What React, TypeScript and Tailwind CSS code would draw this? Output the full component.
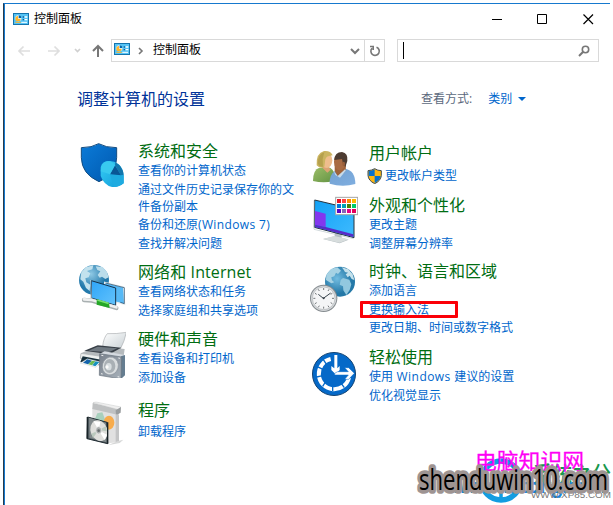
import type { ReactNode } from "react";

function PanelIcon() {
  return (
    <svg width="16" height="12" viewBox="0 0 48 36" className="shrink-0">
      <rect x="1.5" y="1.5" width="45" height="33" fill="#56c4f5" stroke="#1474ae" strokeWidth="3" />
      <circle cx="16" cy="16" r="9" fill="#e9f8ff" />
      <path d="M15 17V9a8 8 0 1 0 8 8z" fill="#ffb52b" />
      <path d="M17 15V7a8 8 0 0 1 8 8z" fill="#0065ad" />
      <path d="M29 10h4v4h-4zM29 18h4v4h-4z" fill="#125c9c" />
      <path d="M35 10h8v4h-8zM35 18h8v4h-8z" fill="#fff" />
      <path d="M7 28h16" stroke="#ffb52b" strokeWidth="3" />
      <path d="M25 28h17" stroke="#fff" strokeWidth="3" />
    </svg>
  );
}

function ShieldIcon() {
  return (
    <svg width="48" height="48" viewBox="24 33 144 144">
      <defs>
        <linearGradient id="shield" x1="0" y1="0" x2="1" y2="1">
          <stop offset="0" stopColor="#0b7bd8" />
          <stop offset="1" stopColor="#0058ae" />
        </linearGradient>
        <linearGradient id="orb" x1="0" y1="0" x2="1" y2="1">
          <stop offset="0" stopColor="#36cdf5" />
          <stop offset="1" stopColor="#119bd8" />
        </linearGradient>
      </defs>
      <path d="M34 53Q66 53 86 41Q107 53 140 53V83Q139 134 87 155Q35 132 34 83Z" fill="url(#shield)" stroke="#144c80" strokeWidth="3" />
      <path d="M92 119Q91 100 108 94Q128 89 146 103Q160 115 161 137V160Q145 173 126 171Q102 166 92 138Z" fill="url(#orb)" />
      <path d="M136 97Q158 109 161 134L153 136L135 105Z" fill="#1376ac" />
      <path d="M135 106L153 136L120 133Z" fill="#095695" />
      <path d="M135 106L120 133L92 124Q94 99 113 94Q126 92 135 106Z" fill="#39c9ef" />
      <path d="M120 134L153 137L161 134V160Q145 172 132 171Z" fill="#1eabe0" />
    </svg>
  );
}

function NetworkIcon() {
  return (
    <svg width="48" height="48" viewBox="24 24 144 144">
      <defs>
        <radialGradient id="netGlobe" cx="40%" cy="30%">
          <stop offset="0" stopColor="#8fc9e5" />
          <stop offset="1" stopColor="#2379ab" />
        </radialGradient>
        <linearGradient id="netScreen" x1="0" y1="0" x2="1" y2="1">
          <stop offset="0" stopColor="#2fa5f8" />
          <stop offset="1" stopColor="#63c3fc" />
        </linearGradient>
      </defs>
      <circle cx="72" cy="75" r="45" fill="url(#netGlobe)" />
      <path d="M34 52L48 37L70 31L67 43L51 48L61 55L56 67L46 70L49 82L61 89L59 108L48 99L40 80L31 73Z" fill="#c3e2ee" />
      <path d="M77 34L98 36L111 51L116 67L106 72L96 65L89 68L83 60L91 49L82 45Z" fill="#bbddeb" />
      <path d="M104 82L161 96L164 148L104 133Z" fill="#56b9f6" stroke="#e8eef0" strokeWidth="4" />
      <path d="M107 84L163 98V146L151 142" fill="none" stroke="#183b59" strokeWidth="2" />
      <path d="M64 77L137 99V151L64 129Z" fill="url(#netScreen)" stroke="#14324d" strokeWidth="3" />
      <path d="M62 75L64 134L132 153" fill="none" stroke="#dde5e5" strokeWidth="2" />
      <path d="M42 135L66 137L139 159" fill="none" stroke="#a9b0b1" strokeWidth="13" strokeLinecap="round" />
      <path d="M42 133L66 135L139 157" fill="none" stroke="#eff0f0" strokeWidth="8" strokeLinecap="round" />
      <path d="M80 133L117 144L119 159L80 149Z" fill="#25a727" />
      <path d="M82 135L116 145" stroke="#77e072" strokeWidth="5" />
    </svg>
  );
}

function PrinterIcon() {
  return (
    <svg width="48" height="48" viewBox="24 15 144 144">
      <defs>
        <linearGradient id="paper" x1="0" y1="0" x2="1" y2="1">
          <stop offset="0" stopColor="#fff" />
          <stop offset="1" stopColor="#c8d0d4" />
        </linearGradient>
        <linearGradient id="speaker" x1="0" y1="0" x2="1" y2="1">
          <stop offset="0" stopColor="#79818c" />
          <stop offset="1" stopColor="#a7b1ba" />
        </linearGradient>
      </defs>
      <path d="M112 26Q140 27 169 22Q164 48 151 72L98 63Q101 38 112 26Z" fill="url(#paper)" stroke="#aaaeb0" strokeWidth="2" />
      <path d="M33 85L80 63L164 72L160 101L95 121L31 101Z" fill="#b5babd" />
      <path d="M43 77L83 61L154 68L118 88Z" fill="#383f47" />
      <path d="M55 77L83 65L142 70L116 82Z" fill="#707981" />
      <path d="M33 85L113 97L100 120L31 99Z" fill="#edf0ef" stroke="#a9aeb0" strokeWidth="2" />
      <path d="M38 94L93 104L86 121L31 111Z" fill="#162f3b" />
      <path d="M31 114L52 101L94 111L77 127Z" fill="#fafafa" stroke="#b2b9bb" strokeWidth="1" />
      <path d="M39 113L52 103L66 107L54 118Z" fill="#1463aa" />
      <path d="M55 118L66 107L77 109L66 121Z" fill="#6bba52" />
      <path d="M67 121L77 109L88 112L76 124Z" fill="#1690bf" />
      <path d="M89 86L104 79L164 90L155 97Z" fill="#d5dae0" />
      <path d="M153 94L165 90V151L153 162Z" fill="#657d90" />
      <path d="M89 86L155 96L153 162L88 151Z" fill="url(#speaker)" stroke="#66717c" strokeWidth="2" />
      <ellipse cx="121" cy="123" rx="24" ry="27" fill="#d9dddf" stroke="#8b949c" strokeWidth="2" transform="rotate(15 121 123)" />
      <ellipse cx="119" cy="123" rx="17" ry="21" fill="#a9b0b5" />
      <ellipse cx="116" cy="125" rx="9" ry="11" fill="#d8dee1" />
      <circle cx="111" cy="126" r="5" fill="#fafafa" />
      <path d="M94 91L100 92M145 99L150 100M93 146L98 147M143 155L148 156" stroke="#eee" strokeWidth="3" />
    </svg>
  );
}

function ProgramsIcon() {
  return (
    <svg width="48" height="48" viewBox="24 225 144 144">
      <path d="M141 349L160 344L149 354L114 361Z" fill="#d7d8d8" />
      <path d="M67 248L146 265L145 351L116 355L67 340Z" fill="#e1e1e1" />
      <path d="M68 234L149 253L145 270L67 252Z" fill="#bfc1c2" />
      <path d="M69 233L78 231L153 246L145 254Z" fill="#f0f0f0" stroke="#b4b6b7" strokeWidth="1" />
      <path d="M137 256L153 246L152 263L138 271Z" fill="#999d9f" />
      <path d="M137 267L147 271V348L137 351Z" fill="#c4c5c6" />
      <path d="M82 265L97 262L111 299H68Z" fill="#a8d0bd" />
      <ellipse cx="117" cy="293" rx="16" ry="21" fill="#f7ac4d" />
      <path d="M53 276L111 292L113 356L51 341Z" fill="#4b565b" stroke="#222e34" strokeWidth="3" />
      <path d="M57 278L108 293L109 352L58 339Z" fill="#81898b" />
      <ellipse cx="87" cy="317" rx="25" ry="32" transform="rotate(-22 87 317)" fill="#dfdfdc" />
      <path d="M86 316L70 288L91 291ZM86 316L111 329L104 345Z" fill="#fff" />
      <path d="M86 316L107 304L111 319ZM86 316L64 326L69 339Z" fill="#bbc9be" />
      <ellipse cx="86" cy="316" rx="9" ry="11" fill="#aaaeae" stroke="#eee" strokeWidth="2" />
      <circle cx="86" cy="317" r="4" fill="#666c6d" />
      <path d="M52 276V341M113 292V356" stroke="#182327" strokeWidth="4" />
    </svg>
  );
}

function UsersIcon() {
  return (
    <svg width="48" height="48" viewBox="30 24 144 144">
      <defs>
        <linearGradient id="greenTop" x1="0" y1="0" x2="1" y2="1">
          <stop offset="0" stopColor="#9dbe68" />
          <stop offset="1" stopColor="#629343" />
        </linearGradient>
        <linearGradient id="blueTop" x1="0" y1="0" x2="1" y2="1">
          <stop offset="0" stopColor="#73a1d1" />
          <stop offset="1" stopColor="#7faee0" />
        </linearGradient>
      </defs>
      <path d="M39 138Q39 104 58 98L83 96Q101 101 104 119L100 139Q68 145 39 138Z" fill="url(#greenTop)" />
      <path d="M65 88L82 91L92 104L82 113L67 98Z" fill="#dca373" />
      <ellipse cx="80" cy="76" rx="17" ry="23" fill="#efbd8d" />
      <path d="M50 91Q48 54 72 48Q92 46 98 61L88 63Q75 65 75 80L73 95Q60 102 50 91Z" fill="#cbb461" />
      <path d="M53 85Q55 56 73 52L68 73L69 95Q59 98 53 85Z" fill="#b5a04d" />
      <path d="M89 146Q88 119 105 107L136 101Q166 107 166 147Q127 158 89 146Z" fill="url(#blueTop)" />
      <path d="M104 89L138 88L137 106Q129 119 113 124L104 108Z" fill="#9f633b" />
      <path d="M101 108L113 123L135 103L138 106L120 128L106 120Z" fill="#c7dbea" />
      <ellipse cx="119" cy="81" rx="17" ry="25" fill="#a96b43" />
      <path d="M103 75Q104 51 126 51Q145 54 142 78L136 96L129 86L126 72Q115 74 103 75Z" fill="#4d3c32" />
      <ellipse cx="131" cy="87" rx="4" ry="7" fill="#9a5f3a" />
    </svg>
  );
}

const swatches = [
  "#e81123", "#ff4343", "#ff8c00", "#ffb900",
  "#0078d7", "#00a2b3", "#498205", "#00cc6a",
  "#5c00c5", "#8764b8", "#e3008c", "#e50059",
];

function DisplayIcon() {
  return (
    <svg width="48" height="48" viewBox="30 183 144 144">
      <defs>
        <linearGradient id="display" x1="0" y1="0" x2="1" y2="1">
          <stop offset="0" stopColor="#12a1f5" />
          <stop offset="1" stopColor="#3fbbff" />
        </linearGradient>
      </defs>
      <path d="M104 285L124 289L125 308L146 314L119 325L69 312L104 304Z" fill="#b5bec2" />
      <path d="M69 312L103 303L146 313L119 323Z" fill="#d7dddd" />
      <path d="M44 195L162 223V308L43 277Z" fill="url(#display)" stroke="#26343f" strokeWidth="3" />
      <path d="M42 196V283L161 311" fill="none" stroke="#bac5ca" strokeWidth="2" />
      <path d="M45 228L77 236V276L45 269Z" fill="#8337ee" />
      <path d="M45 269L77 276L160 298V306L45 276Z" fill="#592ac9" />
      <rect x="107" y="187" width="66" height="52" fill="#fff" stroke="#a5a5a5" strokeWidth="3" />
      {swatches.map((color, i) => (
        <rect key={color} x={111 + (i % 4) * 15} y={192 + Math.floor(i / 4) * 15} width="12" height="12" fill={color} />
      ))}
    </svg>
  );
}

function ClockIcon() {
  return (
    <svg width="48" height="48" viewBox="30 30 144 144">
      <defs>
        <radialGradient id="globe" cx="40%" cy="40%">
          <stop offset="0" stopColor="#72bce0" />
          <stop offset="1" stopColor="#2478a7" />
        </radialGradient>
      </defs>
      <circle cx="120" cy="80" r="45" fill="url(#globe)" />
      <path d="M79 59L93 42L112 37L123 47L114 57L108 53L103 64L94 67L96 76L103 82L94 85L78 75Z" fill="#a6d2e4" />
      <path d="M125 37L145 43L158 58L163 75L155 72L149 62L143 67L137 58L144 53L135 51L131 44Z" fill="#c5e1eb" />
      <path d="M129 69L148 74L154 88L149 105L139 120L130 106L129 94L119 89L122 75Z" fill="#92c8df" />
      <circle cx="71" cy="130" r="41" fill="#858b8f" />
      <circle cx="71" cy="130" r="38" fill="#d5d8da" />
      <circle cx="71" cy="130" r="34" fill="#f4f5f6" stroke="#aeb2b5" strokeWidth="2" />
      <path d="M71 99V105M71 155V161M40 130H46M96 130H102M55 103L58 108M87 103L84 108M45 115L50 118M97 115L92 118M45 146L50 143M97 146L92 143M55 157L58 152M87 157L84 152" stroke="#73777a" strokeWidth="3" />
      <path d="M55 118L70 130L92 114" fill="none" stroke="#38444d" strokeWidth="3" />
      <circle cx="71" cy="130" r="3" fill="#303840" />
    </svg>
  );
}

function EaseIcon() {
  return (
    <svg width="48" height="48" viewBox="30 285 144 144">
      <circle cx="102" cy="357" r="64.5" fill="#0569c8" stroke="#124373" strokeWidth="3" />
      {/* dial, open where the two arrows cross it */}
      <path d="M92 312A46 46 0 1 0 147 368" fill="none" stroke="#fff" strokeWidth="12" />
      <path d="M68 311L80 329M52 335L70 344M50 366L68 362M68 394L78 378M98 408V392M133 398L122 383" stroke="#0569c8" strokeWidth="4" />
      <path d="M103 300H112V340L119 333V345L107 358L94 345V333L103 340Z" fill="#fff" />
      <path d="M113 350H145L134 338H146L163 355L146 373H134L145 360H104V355Z" fill="#fff" stroke="#0569c8" strokeWidth="1.5" />
    </svg>
  );
}

function UacShield() {
  return (
    <svg width="15" height="16" viewBox="202 94 45 48" className="shrink-0">
      <path d="M205 102Q217 101 225 96Q234 102 245 102V117Q243 133 225 141Q206 132 205 116Z" fill="#fdb813" stroke="#424b50" strokeWidth="3" />
      <path d="M207 104Q217 103 225 98V118H207ZM225 118H243Q241 131 225 139Z" fill="#0872cc" />
    </svg>
  );
}

type SectionProps = {
  icon: ReactNode;
  title: string;
  className: string;
  iconClass?: string;
  linksClass?: string;
  children: ReactNode;
};

function Section({ icon, title, className, iconClass = "", linksClass = "pt-px", children }: SectionProps) {
  return (
    <section className={`flex ${className}`}>
      <div className={`w-12 shrink-0 ${iconClass}`}>{icon}</div>
      <div>
        <h2 className="h-5 text-base leading-5 text-[#006d12] whitespace-nowrap">{title}</h2>
        <div className={`flex flex-col items-start gap-[1.5px] text-xs leading-[17px] text-[#0066cc] ${linksClass}`}>{children}</div>
      </div>
    </section>
  );
}

function Watermark() {
  return (
    <svg width="203" height="62" viewBox="410 443 203 62" className="absolute right-0 bottom-0">
      <circle cx="501" cy="480.5" r="19.5" fill="none" stroke="#139de1" strokeWidth="5.5" />
      <path d="M484 490H518M501 484V501" stroke="#139de1" strokeWidth="3.5" />
      <text x="533" y="483" fontSize="23" fontWeight="500" textLength="78" lengthAdjust="spacingAndGlyphs" fill="#17984c">系统之分</text>
      <text x="452" y="493" fontSize="20" fontWeight="700" textLength="154" lengthAdjust="spacingAndGlyphs" fill="#1685df">www.xitong.com</text>
      <text x="531" y="498" fontSize="8.5" textLength="80" lengthAdjust="spacingAndGlyphs" fill="#777" fontFamily="Liberation Sans, sans-serif">WWW.XP85.COM</text>
      <text x="475" y="469" fontSize="22" textLength="109" lengthAdjust="spacingAndGlyphs" fill="#ff00f6" stroke="#ff00f6" strokeWidth="0.3">电脑知识网</text>
      <text x="419" y="490" fontSize="29.5" fontWeight="500" textLength="189" lengthAdjust="spacingAndGlyphs" fill="#000" stroke="#9e9492" strokeWidth="7.5" strokeLinejoin="round" paintOrder="stroke">shenduwin10.com</text>
    </svg>
  );
}

export default function App() {
  return (
    <div className="relative h-[505px] w-[613px] overflow-hidden bg-white pt-[3px] pl-[3px] font-['Open_Sans','Noto_Sans_CJK_SC',sans-serif]">
      <div className="h-[502px] w-[607px] border-t border-l border-t-[#1679ce] border-l-[#263b4d]">
        <div className="h-full border-l border-[#1679ce]">
          <header className="flex h-[29px] items-center pl-2 text-xs text-black">
            <PanelIcon />
            <span className="ml-[5px] leading-4">控制面板</span>
            <svg width="104" height="12" viewBox="0 0 104 12" className="ml-auto mr-[14px]" fill="none" stroke="#000">
              <path d="M0 6.5H10" />
              <path d="M45.5 1.5H54.5V10.5H45.5Z" />
              <path d="M91.5 1.5L101 11M101 1.5L91.5 11" strokeWidth="1.2" />
            </svg>
          </header>

          <nav className="mt-[6px] flex h-[23px] items-center">
            <svg width="87" height="16" viewBox="0 0 87 16" className="shrink-0" fill="none" strokeWidth="1.7">
              <path d="M25 8H14M18.5 3.5L14 8L18.5 12.5M43 8H54M49.5 3.5L54 8L49.5 12.5" stroke="#dedede" />
              <path d="M70 6L72.5 8.5L75 6" stroke="#d0d0d0" />
            </svg>
            <svg width="12" height="14" viewBox="0 0 12 14" className="mr-[7px] shrink-0" fill="none" stroke="#777" strokeWidth="2">
              <path d="M6 13V2M1 7L6 2L11 7" />
            </svg>
            <div className="flex h-[23px] w-[274px] shrink-0 items-center border border-[#d9d9d9] pl-[2px] text-xs">
              <div className="pb-[3px]">
                <PanelIcon />
              </div>
              <svg width="6" height="8" viewBox="0 0 6 8" className="ml-[8px]" fill="none" stroke="#777" strokeWidth="1.6">
                <path d="M1 1L4 4L1 7" />
              </svg>
              <span className="ml-[9px] pb-px">控制面板</span>
              <svg width="10" height="8" viewBox="0 0 10 8" className="ml-auto mr-[4px]" fill="none" stroke="#777" strokeWidth="2">
                <path d="M1 2L5 6L9 2" />
              </svg>
              <div className="flex h-full w-5 items-center justify-center border-l border-[#d9d9d9]">
                <svg width="12" height="12" viewBox="0 0 12 12" fill="none" stroke="#777" strokeWidth="1.6">
                  <path d="M7.5 2.2A4.2 4.2 0 1 1 3 3.3M1 1.5H4.2V5" />
                </svg>
              </div>
            </div>
            <div className="ml-3 flex h-[23px] w-[202px] shrink-0 items-center border border-[#d9d9d9] pl-[5px]">
              <div className="h-[17px] w-px bg-black" />
              <svg width="12" height="12" viewBox="0 0 12 12" className="ml-auto mr-2" fill="none" stroke="#777" strokeWidth="1.6">
                <circle cx="7.5" cy="4.5" r="3.2" />
                <path d="M5.2 6.8L1 11" strokeWidth="2" />
              </svg>
            </div>
          </nav>

          <main>
            <div className="mt-[27px] flex h-5 items-center pl-[72px]">
              <h1 className="text-base leading-5 text-[#003399]">调整计算机的设置</h1>
              <span className="ml-[216px] text-xs text-[#5b687c]">查看方式:</span>
              <span className="ml-[16px] text-xs text-[#0066cc]">类别</span>
              <span className="ml-[6px] border-x-[4px] border-t-[4px] border-x-transparent border-t-[#0066cc]" />
            </div>

            <div className="flex pl-[73px] pt-[32px]">
              <div className="w-[232px]">
                <Section icon={<ShieldIcon />} title="系统和安全" className="h-[121px] gap-3">
                  <a>查看你的计算机状态</a>
                  <a>通过文件历史记录保存你的文<br />件备份副本</a>
                  <a>备份和还原<span className="tracking-[0.36px]">(Windows 7)</span></a>
                  <a>查找并解决问题</a>
                </Section>
                <Section icon={<NetworkIcon />} title="网络和 Internet" className="h-[67px] gap-3 tracking-[0.1px]" iconClass="pt-px">
                  <a className="tracking-normal">查看网络状态和任务</a>
                  <a className="tracking-normal">选择家庭组和共享选项</a>
                </Section>
                <Section icon={<PrinterIcon />} title="硬件和声音" className="h-[71px] gap-3" iconClass="pt-px">
                  <a>查看设备和打印机</a>
                  <a>添加设备</a>
                </Section>
                <Section icon={<ProgramsIcon />} title="程序" className="h-[60px] gap-3" linksClass="pt-[3px]">
                  <a>卸载程序</a>
                </Section>
              </div>

              <div className="pt-[2px]">
                <Section icon={<UsersIcon />} title="用户帐户" className="h-[52px] gap-[11px]" linksClass="pt-1">
                  <a className="-ml-[2px] flex items-center gap-[3px]"><UacShield />更改帐户类型</a>
                </Section>
                <Section icon={<DisplayIcon />} title="外观和个性化" className="h-[66px] gap-[11px]" iconClass="pt-px">
                  <a>更改主题</a>
                  <a>调整屏幕分辨率</a>
                </Section>
                <Section icon={<ClockIcon />} title="时钟、语言和区域" className="h-[86px] gap-[11px]" iconClass="pt-1">
                  <a>添加语言</a>
                  <a className="relative">
                    更换输入法
                    <span className="absolute -left-[9px] top-0 h-[17px] w-[98px] rounded-[1px] border-[3px] border-[#fb0007]" />
                  </a>
                  <a>更改日期、时间或数字格式</a>
                </Section>
                <Section icon={<EaseIcon />} title="轻松使用" className="h-[60px] gap-[11px]" iconClass="pt-[3px]">
                  <a>使用<span className="tracking-[0.45px]"> Windows </span>建议的设置</a>
                  <a>优化视觉显示</a>
                </Section>
              </div>
            </div>
          </main>
        </div>
      </div>
      <Watermark />
    </div>
  );
}
